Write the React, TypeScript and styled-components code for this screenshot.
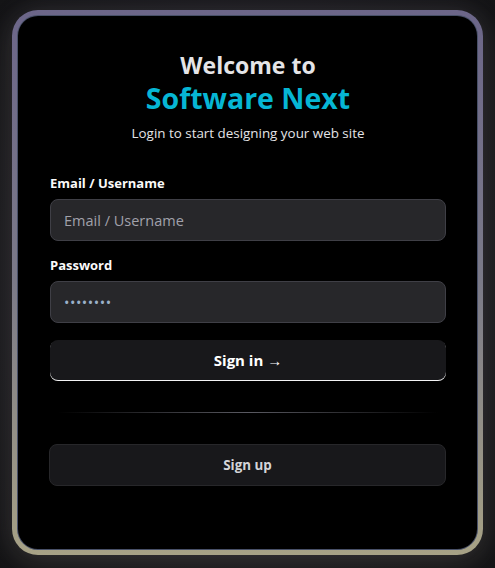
import React from "react";
import styled, { createGlobalStyle } from "styled-components";

const Global = createGlobalStyle`
  html, body { margin: 0; padding: 0; }
  body {
    background: radial-gradient(ellipse at 50% 50%, #2a2a30 0%, #1c1b20 60%, #141416 100%);
    font-family: "Open Sans", "Noto Sans", sans-serif;
    min-height: 568px;
  }
  * { box-sizing: border-box; }
`;

const Page = styled.div`
  width: 495px;
  height: 568px;
  padding: 10px 12px 13px 12px;
  display: flex;
`;

const Frame = styled.div`
  flex: 1;
  padding: 5px;
  border-radius: 26px;
  background: linear-gradient(180deg, #6c6689 0%, #7b7a88 50%, #a7a286 100%);
  box-shadow: 0 0 24px rgba(120, 115, 140, 0.18), 0 10px 30px rgba(160, 150, 110, 0.12);
  display: flex;
`;

const Card = styled.div`
  flex: 1;
  background: #000;
  border-radius: 21px;
  border: 1px solid rgba(90, 100, 130, 0.8);
  padding: 34px 31px 0 32px;
  display: flex;
  flex-direction: column;
`;

const Header = styled.div`
  text-align: center;
  display: flex;
  flex-direction: column;
  align-items: center;
`;

const Welcome = styled.h1`
  margin: 0;
  font-size: 23px;
  line-height: 30px;
  font-weight: 700;
  color: #e4e4e7;
`;

const Brand = styled.h2`
  margin: 0;
  font-size: 28.5px;
  line-height: 36px;
  font-weight: 700;
  color: #06b6d4;
`;

const Subtitle = styled.p`
  margin: 8px 0 0;
  font-size: 13.4px;
  line-height: 18px;
  color: #e4e4e7;
`;

const Form = styled.form`
  margin-top: 32px;
  display: flex;
  flex-direction: column;
  gap: 15px;
`;

const Field = styled.div`
  display: flex;
  flex-direction: column;
  gap: 7px;
`;

const Label = styled.label`
  font-size: 13px;
  line-height: 18px;
  font-weight: 700;
  color: #fafafa;
`;

const Input = styled.input<{ $dots?: boolean }>`
  height: 42px;
  width: 100%;
  background: #27272a;
  border: 1px solid #3f3f46;
  border-radius: 8px;
  padding: 0 13px;
  font-family: inherit;
  font-size: 14.5px;
  color: #9bb0c8;
  letter-spacing: ${(p) => (p.$dots ? "0.5px" : "0")};
  outline: none;
  &::placeholder { color: #a1a1aa; }
`;

const Primary = styled.button`
  margin-top: 2px;
  height: 40px;
  width: 100%;
  background: #18181b;
  border: none;
  border-radius: 8px;
  box-shadow: 0 1px 0 #f4f4f5;
  color: #fff;
  font-family: inherit;
  font-size: 15px;
  font-weight: 700;
  cursor: pointer;
`;

const Divider = styled.div`
  margin: 32px 8px 31px;
  height: 1px;
  background: linear-gradient(90deg, transparent 0%, #5a5a62 50%, transparent 100%);
`;

const Secondary = styled.button`
  margin-left: -1px;
  height: 42px;
  width: calc(100% + 1px);
  background: #18181b;
  border: 1px solid #27272a;
  border-radius: 8px;
  color: #d4d4d8;
  font-family: inherit;
  font-size: 13.4px;
  font-weight: 700;
  cursor: pointer;
`;

export default function App() {
  return (
    <>
      <Global />
      <Page>
        <Frame>
          <Card>
            <Header>
              <Welcome>Welcome to</Welcome>
              <Brand>Software Next</Brand>
              <Subtitle>Login to start designing your web site</Subtitle>
            </Header>
            <Form onSubmit={(e) => e.preventDefault()}>
              <Field>
                <Label>Email / Username</Label>
                <Input placeholder="Email / Username" />
              </Field>
              <Field>
                <Label>Password</Label>
                <Input type="password" defaultValue="password" $dots />
              </Field>
              <Primary type="submit">Sign in →</Primary>
            </Form>
            <Divider />
            <Secondary type="button">Sign up</Secondary>
          </Card>
        </Frame>
      </Page>
    </>
  );
}
